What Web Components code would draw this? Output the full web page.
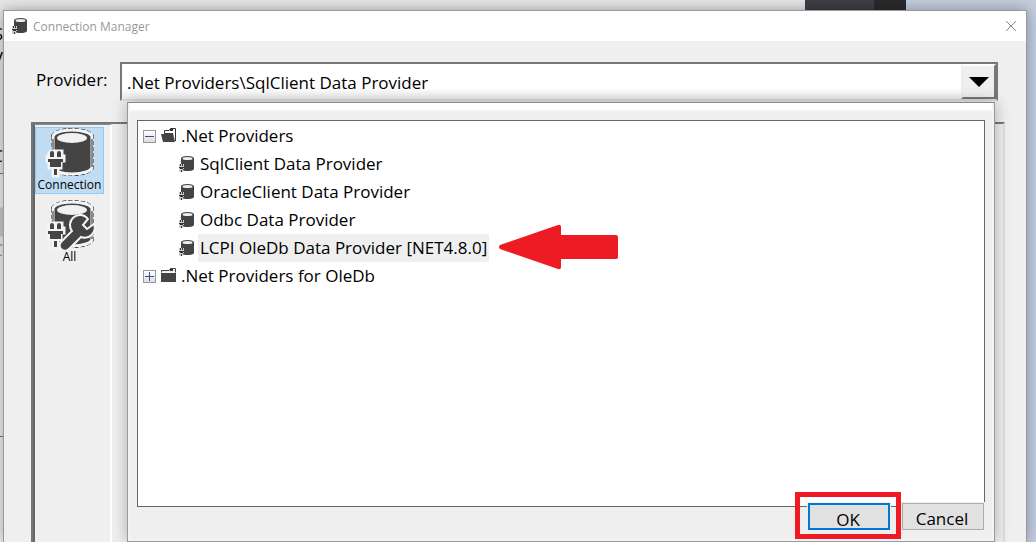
<!DOCTYPE html>
<html lang="en">
<head>
<meta charset="utf-8">
<title>Connection Manager</title>
<style>
html,body{margin:0;height:100%;overflow:hidden}
body{font-family:"Open Sans","Noto Sans",sans-serif;font-size:17px;color:#000}
</style>
</head>
<body>
<app-desktop></app-desktop>
<script>
const define = (name, html) => customElements.define(name, class extends HTMLElement {
  constructor(){
    super();
    this.attachShadow({mode:'open'}).innerHTML = html;
  }
});

const drum = `<path d="M17 9C17 5 25 2 36 2s20 3 20 7v30c0 4-9 7-20 7s-19-3-19-7z" fill="none" stroke="#111" stroke-width="4" stroke-dasharray="4 2"/>
<path d="M17 9C17 5 25 2 36 2s20 3 20 7v30c0 4-9 7-20 7s-19-3-19-7z" fill="#444" stroke="#f4f4f4" stroke-width="3"/>
<path d="M17 11v28M56 11v28" stroke="#222"/>
<ellipse cx="36" cy="10" rx="15" ry="5" fill="#f0f0f0"/>`;
const plug = `<path d="M15 23h4v4h3v-4h4v5h2v5h-3v7h-3v8h-5v-8h-4v-7h-2v-5h2v-3z" fill="#f4f4f4" stroke="#f4f4f4" stroke-width="3"/>
<path d="M14 29v-4q0-2 2-2t2 2v4zM21 29v-4q0-2 2-2t2 2v4zM12 31h15v3h-2v5H14v-5h-2zM18 41h3v6h-3z" fill="#444"/>`;
const wrench = `<path d="M52 19a10 10 0 0 0-16 12L25 42a5 5 0 0 0 8 7l12-12a10 10 0 0 0 13-13l-7 5-4-4z" fill="#444" stroke="#f4f4f4" stroke-width="2"/>`;

define('drum-icon', `<style>:host{display:block;width:15px;height:16px;flex:none}svg{display:block}</style>
<svg width="15" height="16" viewBox="0 0 15 16"><path d="M2 2Q3 0 8.500 0T15 2v11q-1 2-6.500 2T2 13z" fill="#444"/><ellipse cx="8.500" cy="2.500" rx="5" ry="1.500" fill="#eee"/><path d="M0 8h5v5H4v3H0z" fill="#ccc"/><path d="M1 8h1v2H1zM3 8h1v2H3zM0 11h5v1H4v1H1v-1H0zM2 14h1v2H2z" fill="#333"/></svg>`);

define('folder-icon', `<style>:host{display:block;width:15px;height:16px;flex:none}svg{display:block}.open{display:none}:host([open]) .open{display:block}:host([open]) .shut{display:none}</style>
<svg class="open" width="15" height="16" viewBox="0 0 15 16"><path d="M3.500 6V2.500H8L9.500.500h5V13" fill="#fff" stroke="#333"/><path d="M9 1h3v2H9z" fill="#333"/><path d="M3 5h9l2 9H2L0 6h3z" fill="#444"/></svg>
<svg class="shut" width="15" height="16" viewBox="0 0 15 16"><path d="M.5 4.500v-2H8l1.500-2h5v4" fill="#eee" stroke="#444"/><path d="M9 1h3v2H9z" fill="#333"/><path d="M0 5h15v9H0z" fill="#444"/></svg>`);

define('title-bar', `<style>
:host{display:flex;align-items:center;height:30px;background:#fff;padding:0 9px 0 8px;color:#999;font-size:12px}
drum-icon{margin-right:6px}
h1{font:inherit;margin:0;flex:1}
button{border:0;background:none;padding:0;width:12px;height:12px}svg{display:block}
</style><drum-icon></drum-icon><h1><slot></slot></h1>
<button aria-label="Close"><svg width="12" height="12"><path d="M1 1l10 10M11 1L1 11" stroke="#888"/></svg></button>`);

define('provider-field', `<style>
:host{display:flex;align-items:flex-start}
label{width:84px;line-height:36px}
.box{flex:1;display:flex;height:35px;border:2px solid;border-color:#777 #777 #ddd #777;background:linear-gradient(#fff 70%,#eee)}
select{flex:1;min-width:0;appearance:none;border:0;background:none;font:inherit;color:#000;padding:2px 5px 0;outline:0}
.arrow{width:31px;border:2px solid;border-color:#fff #777 #777 #eee;background:#efefef;display:grid;place-items:center}
</style><label for="p">Provider:</label><div class="box"><select id="p"><option>.Net Providers\\SqlClient Data Provider</option></select>
<span class="arrow"><svg width="20" height="10"><path d="M0 0h20L10 10z"/></svg></span></div>`);

define('page-tab', `<style>
:host{display:block}
button{box-sizing:border-box;width:69px;height:67px;margin:0;padding:0;border:1px solid transparent;background:none;font:12px/14px "Open Sans","Noto Sans",sans-serif;color:#000;display:flex;flex-direction:column;align-items:center;overflow:visible}
:host([selected]) button{background:#c0dcf3;border-color:#90c8f6}
svg{display:block;width:68px;height:50px;flex:none}
.w{display:none}:host([tool]) .w{display:block}
</style><button><svg viewBox="0 0 68 50">${drum}${plug}<g class="w">${wrench}</g></svg><slot></slot></button>`);

define('tree-row', `<style>
:host{display:flex;align-items:center;height:28px;line-height:28px}
:host([leaf]){padding-left:36px}
button{box-sizing:border-box;width:13px;height:13px;padding:0;margin-right:5px;border:1px solid #999;background:linear-gradient(#fff,#ddd);display:grid;place-items:center}
svg{display:block}
.label{position:relative;padding:0 2px;white-space:nowrap;margin-left:3px}
:host([leaf]) .label{margin-left:4px}
:host([selected]) .label{background:#efefef}
:host([leaf]) button,:host([leaf]) folder-icon,:host(:not([leaf])) drum-icon,:host([open]) .v,:host([open]) .shut,:host(:not([open])) .opened{display:none}
</style><button aria-label="Toggle"><svg width="9" height="9"><path d="M0 4.500h9" stroke="#334f95"/><path class="v" d="M4.500 0v9" stroke="#334f95"/></svg></button>
<folder-icon class="opened" open></folder-icon><folder-icon class="shut"></folder-icon><drum-icon></drum-icon><span class="label"><slot></slot><slot name="mark"></slot></span>`);

define('callout-arrow', `<style>:host{position:absolute;left:100%;top:50%;margin:-24px 0 0 10px}svg{display:block}</style>
<svg width="120" height="46"><path d="M1 21L59 1q3-1 3 2v8h55q2 0 2 2v20q0 2-2 2H62v8q0 3-3 2L1 25q-2-2 0-4z" fill="#ed1c24"/></svg>`);

define('push-button', `<style>
:host{display:block;position:relative}
button{box-sizing:border-box;width:82px;height:27px;padding:4px 2px 0 0;border:1px solid #adadad;background:#e1e1e1;font:inherit;line-height:22px;color:#000;display:block;box-shadow:0 0 0 1px #efefef}
:host([primary]) button{border:2px solid #0078d7}
.mark{display:none}
:host([primary]) .mark{display:block;position:absolute;inset:-11px -11px -9px -13px;border:5px solid #ed1c24}
</style><button><slot></slot></button><span class="mark"></span>`);

define('provider-popup', `<style>
:host{box-sizing:border-box;display:flex;flex-direction:column;border:1px solid #999;border-top-color:#888;background:#efefef;box-shadow:0 0 14px rgba(0,0,0,.28)}
.frame{flex:1;display:flex;flex-direction:column;border:2px solid #f0f5fb;border-top:0;box-sizing:border-box;min-height:0}
.strip{height:7px;background:#fff;border-bottom:2px solid #f0f5fb}
.tree{flex:1;min-height:0;margin:8px 7px 0;border:1px solid #666;background:#fff;padding:1px 5px}
footer{display:flex;justify-content:flex-end;gap:12px;margin:-4px 8px 9px 0}
</style><div class="frame"><div class="strip"></div><div class="tree" role="tree">
<tree-row open>.Net Providers</tree-row>
<tree-row leaf>SqlClient Data Provider</tree-row>
<tree-row leaf>OracleClient Data Provider</tree-row>
<tree-row leaf>Odbc Data Provider</tree-row>
<tree-row leaf selected>LCPI OleDb Data Provider [NET4.8.0]<callout-arrow slot="mark"></callout-arrow></tree-row>
<tree-row>.Net Providers for OleDb</tree-row></div>
<footer><push-button primary>OK</push-button><push-button>Cancel</push-button></footer></div>`);

define('connection-window', `<style>
:host{display:flex;flex-direction:column;border:1px solid #999;border-bottom:0;background:#efefef;box-shadow:0 0 14px rgba(0,0,0,.35);position:relative;z-index:1;min-height:0}
main{flex:1;display:flex;flex-direction:column;position:relative;padding:21px 28px 0 27px;min-height:0}
provider-field{margin-left:5px}
.panel{flex:1;margin:21px -7px 0 0;border:solid #777;border-width:2px 2px 0;border-right-color:#ddd;display:flex;min-height:0}
nav{width:75px;border-left:2px solid #666;border-top:1px solid #888;border-right:2px solid #fff;display:flex;flex-direction:column;gap:5px;padding-top:2px}
provider-popup{position:absolute;inset:61px 31px 0 123px}
</style><title-bar>Connection Manager</title-bar><main><provider-field></provider-field>
<div class="panel"><nav><page-tab selected>Connection</page-tab><page-tab tool>All</page-tab></nav></div>
<provider-popup></provider-popup></main>`);

define('back-strip', `<style>
:host{display:flex;flex-direction:column;align-items:flex-end;overflow:hidden;line-height:24px;background:linear-gradient(#e9e9e9 0 163px,#777 163px 164px,#efefef 164px 197px,#ccc 198px 226px,#efefef 227px 426px,#777 426px 427px,#efefef 427px);padding-top:12px}
.b{margin-bottom:74px}.c{color:#113;margin-bottom:70px}.d{color:#999}
</style><span class="a">S</span><span class="b">V</span><span class="c">C</span><span class="d">C</span>`);

define('app-desktop', `<style>
:host{display:grid;grid-template:10px minmax(0,1fr)/3px minmax(0,1fr) 9px;height:100vh;background:#c4cfe0}
.top{grid-column:1/4;display:flex}
.light{flex:805;background:#e9e9e9}.dark{flex:69;background:#3f3f46}.darker{flex:32;background:#2b2b2d}.sky{flex:130}
</style><div class="top"><div class="light"></div><div class="dark"></div><div class="darker"></div><div class="sky"></div></div>
<back-strip></back-strip><connection-window></connection-window>`);
</script>
</body>
</html>
